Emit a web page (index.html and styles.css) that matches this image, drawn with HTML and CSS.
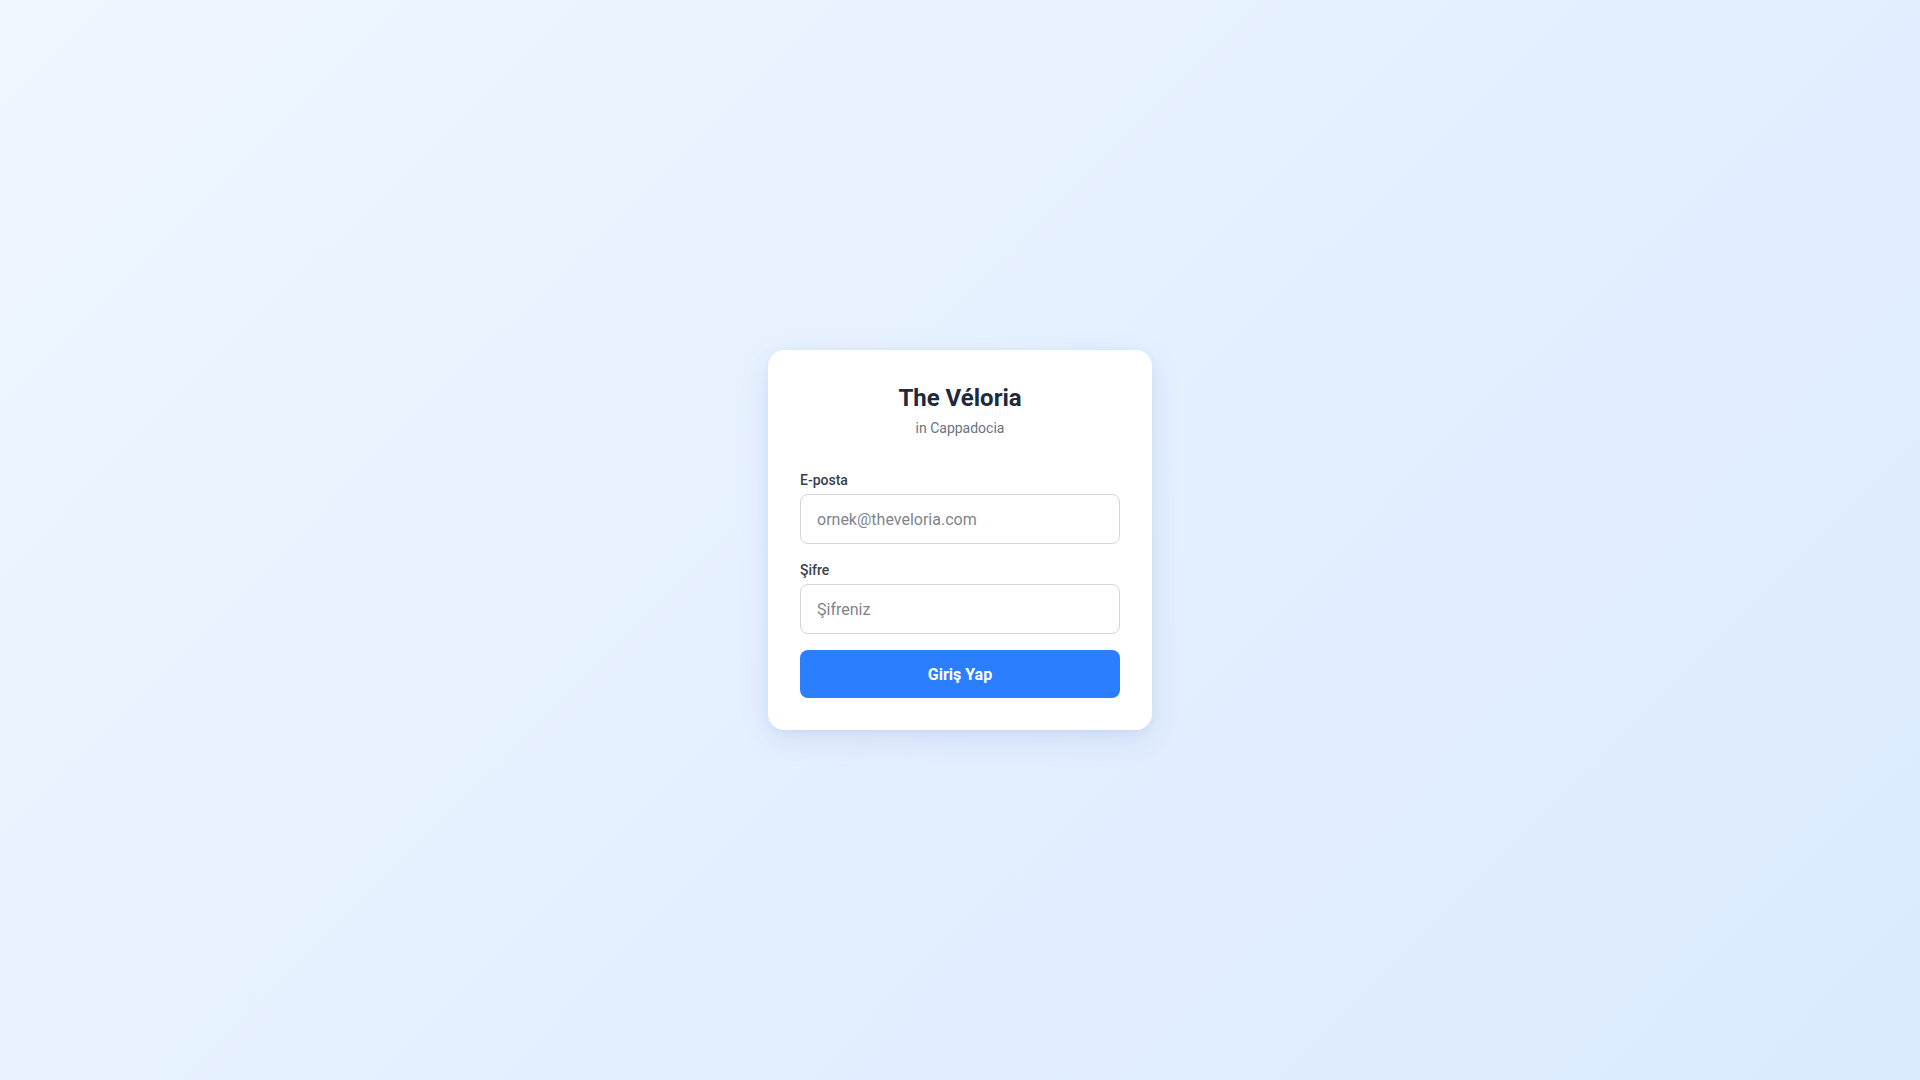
FILE: index.html
```html
<!DOCTYPE html>
<html lang="tr">
<head>
<meta charset="utf-8">
<title>The Véloria</title>
<link rel="stylesheet" href="styles.css">
</head>
<body>
<main class="page">
  <form class="card">
    <header class="brand">
      <h1 class="brand-title">The Véloria</h1>
      <p class="brand-sub">in Cappadocia</p>
    </header>
    <div class="field">
      <label class="field-label" for="email">E-posta</label>
      <input class="field-input" id="email" type="email" placeholder="ornek@theveloria.com">
    </div>
    <div class="field">
      <label class="field-label" for="pw">Şifre</label>
      <input class="field-input" id="pw" type="password" placeholder="Şifreniz">
    </div>
    <button class="submit" type="button">Giriş Yap</button>
  </form>
</main>
</body>
</html>
```
FILE: styles.css
```css
* { box-sizing: border-box; }
html, body { margin: 0; padding: 0; height: 100%; }
body {
  font-family: Roboto, "Liberation Sans", sans-serif;
  background: linear-gradient(135deg, #eff6ff 0%, #dbeafe 100%);
  color: #1f2937;
}
.page {
  min-height: 100vh;
  display: flex;
  align-items: center;
  justify-content: center;
}
.card {
  width: 384px;
  background: #ffffff;
  border-radius: 16px;
  padding: 32px;
  box-shadow: 0 10px 30px rgba(59, 100, 180, 0.12), 0 2px 8px rgba(59, 100, 180, 0.06);
  display: flex;
  flex-direction: column;
  gap: 16px;
  margin-top: 0;
}
.brand {
  text-align: center;
  margin-bottom: 16px;
}
.brand-title {
  margin: 0;
  font-size: 24px;
  line-height: 32px;
  font-weight: 700;
  color: #1e293b;
}
.brand-sub {
  margin: 4px 0 0;
  font-size: 14px;
  line-height: 20px;
  color: #6b7280;
}
.field {
  display: flex;
  flex-direction: column;
  gap: 4px;
}
.field-label {
  font-size: 14px;
  line-height: 20px;
  font-weight: 500;
  color: #374151;
}
.field-input {
  width: 100%;
  height: 50px;
  padding: 12px 16px;
  font-family: Roboto, "Liberation Sans", sans-serif;
  font-size: 16px;
  line-height: 24px;
  color: #1f2937;
  border: 1px solid #d1d5db;
  border-radius: 8px;
  background: #fff;
  outline: none;
}
.field-input::placeholder { color: #80848b; }
.submit {
  height: 48px;
  border: none;
  border-radius: 8px;
  background: #2b7fff;
  color: #fff;
  font-family: Roboto, "Liberation Sans", sans-serif;
  font-size: 16px;
  font-weight: 700;
  cursor: pointer;
}
```
